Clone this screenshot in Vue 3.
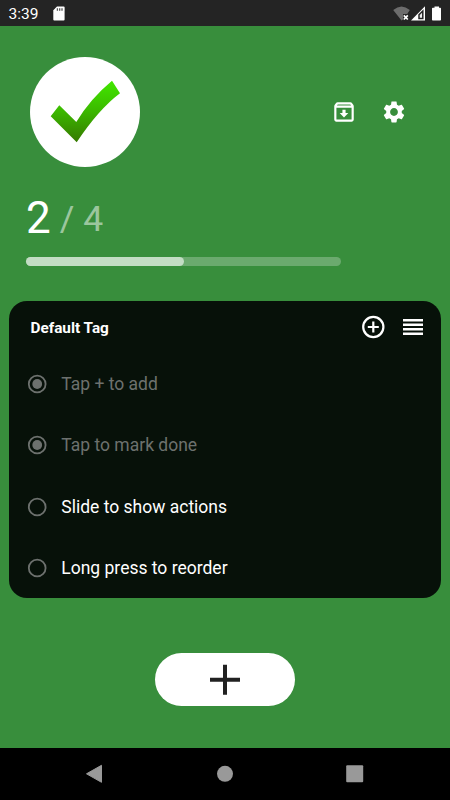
<script setup>
import { computed, ref } from 'vue'

const tasks = ref([
  { text: 'Tap + to add', done: true },
  { text: 'Tap to mark done', done: true },
  { text: 'Slide to show actions', done: false },
  { text: 'Long press to reorder', done: false },
])
const doneCount = computed(() => tasks.value.filter((t) => t.done).length)
const percent = computed(() => (doneCount.value / tasks.value.length) * 100)
</script>

<template>
  <div class="screen">
    <header class="status">
      <span class="time">3:39</span>
      <svg class="sd" width="12" height="15" viewBox="0 0 12 15">
        <path d="M4 0.5h6.6a1 1 0 0 1 1 1v12a1 1 0 0 1-1 1H1.300a1 1 0 0 1-1-1V4.200z" fill="#fff" />
        <path d="M4.400 2.300v2.500M6.700 2.300v2.500M9 2.300v2.500" stroke="#555" stroke-width="1.300" />
      </svg>
      <svg class="signals" width="50" height="16" viewBox="0 0 50 16">
        <path d="M0.200 4Q8.500-3.200 16.800 4L14.200 8H10V13.500L8.500 14.500Z" fill="#6c6c6c" />
        <path d="M10.800 9.300l4 4.200M14.800 9.300l-4 4.200" stroke="#fff" stroke-width="1.700" />
        <path d="M18 14.500L32 0.300V14.500Z" fill="#fff" />
        <path d="M26 12.500V8.800L29.800 5V12.500Z" fill="#eee" stroke="#242424" stroke-width="1.500" />
        <path d="M41.500 0.500h4.500v1.300h1.200q.8 0 .8.800v11.200q0 .8-.8.800h-7.400q-.8 0-.8-.8V2.600q0-.8.8-.8h1.700z" fill="#fff" />
      </svg>
    </header>

    <main class="content">
      <section class="top">
        <div class="logo">
          <svg width="110" height="110" viewBox="0 0 110 110">
            <defs>
              <linearGradient id="tick" x1="0" y1="0" x2="0" y2="1">
                <stop offset="0" stop-color="#42e800" />
                <stop offset="0.450" stop-color="#3cbd00" />
                <stop offset="1" stop-color="#367900" />
              </linearGradient>
            </defs>
            <path d="M20.700 59.300L29.300 48.300L46.300 65Q60 42 82 23.700L90 36.300Q68.500 52.500 46.700 85.300Z" fill="url(#tick)" />
          </svg>
        </div>
        <div class="tools">
          <svg width="26" height="26" viewBox="0 0 24 24" fill="#fff">
            <path d="M20.540 5.230l-1.390-1.680C18.880 3.210 18.470 3 18 3H6c-.470 0-.880.210-1.160.550L3.460 5.230C3.170 5.570 3 6.020 3 6.500V19c0 1.100.900 2 2 2h14c1.100 0 2-.900 2-2V6.500c0-.480-.170-.930-.460-1.270zM6.240 5h11.520l.830 1H5.420l.820-1zM5 19V8h14v11H5zm8.450-9h-2.900v3H8l4 4 4-4h-2.550z" />
          </svg>
          <svg width="26" height="26" viewBox="0 0 24 24" fill="#fff">
            <path d="M19.140 12.940c.040-.300.060-.610.060-.940 0-.320-.020-.640-.070-.940l2.030-1.580c.180-.140.230-.410.120-.610l-1.920-3.320c-.120-.220-.370-.290-.590-.220l-2.390.960c-.500-.380-1.030-.700-1.620-.940l-.360-2.540c-.040-.240-.240-.410-.480-.410h-3.840c-.240 0-.430.170-.470.410l-.360 2.540c-.590.240-1.130.570-1.620.940l-2.390-.960c-.220-.080-.470 0-.590.220L2.740 8.870c-.120.210-.080.470.120.610l2.030 1.580c-.050.300-.090.630-.090.940s.020.640.070.940l-2.030 1.580c-.180.140-.230.410-.120.610l1.920 3.320c.120.220.370.290.590.220l2.390-.960c.500.380 1.030.700 1.620.940l.360 2.540c.050.240.240.410.480.410h3.840c.240 0 .440-.170.470-.410l.360-2.540c.590-.240 1.130-.560 1.620-.940l2.390.960c.220.080.470 0 .590-.220l1.920-3.320c.120-.220.070-.470-.120-.610l-2.010-1.580zM12 15.600c-1.980 0-3.600-1.620-3.600-3.600s1.620-3.600 3.600-3.600 3.600 1.620 3.600 3.600-1.620 3.600-3.600 3.600z" />
          </svg>
        </div>
      </section>

      <section class="progress">
        <div class="count">
          <span class="done">{{ doneCount }}</span>
          <span class="total">/ {{ tasks.length }}</span>
        </div>
        <div class="track"><div class="fill" :style="{ width: percent + '%' }"></div></div>
      </section>

      <section class="card">
        <div class="card-head">
          <h2>Default Tag</h2>
          <div class="card-tools">
            <svg width="24" height="24" viewBox="0 0 24 24" fill="none" stroke="#fff" stroke-width="2.200">
              <circle cx="12.300" cy="12" r="10.100" />
              <path d="M12.300 6.500v11M6.800 12h11" />
            </svg>
            <svg width="20" height="16" viewBox="0 0 20 16">
              <path d="M0 1.300h20M0 5.800h20M0 10.300h20M0 14.800h20" stroke="#fff" stroke-width="2.400" />
            </svg>
          </div>
        </div>
        <ul>
          <li v-for="t in tasks" :key="t.text" :class="{ checked: t.done }">
            <svg width="20" height="20" viewBox="0 0 20 20">
              <circle cx="10.200" cy="10" r="8.400" fill="none" stroke="#6d716e" stroke-width="1.800" />
              <circle v-if="t.done" cx="10.200" cy="10" r="4.900" fill="#6d716e" />
            </svg>
            <span>{{ t.text }}</span>
          </li>
        </ul>
      </section>

      <button class="add" type="button" aria-label="Add">
        <svg width="32" height="32" viewBox="0 0 32 32">
          <path d="M16 0.700v30M1 15.700h30" stroke="#212121" stroke-width="4" />
        </svg>
      </button>
    </main>

    <nav class="navbar">
      <svg width="18" height="20" viewBox="0 0 18 20"><path d="M0.500 9.800L15.500 1.300V18.300Z" fill="#999" stroke="#999" stroke-linejoin="round" /></svg>
      <svg width="18" height="20" viewBox="0 0 18 20"><circle cx="9" cy="9.800" r="8" fill="#999" /></svg>
      <svg width="18" height="20" viewBox="0 0 18 20"><rect x="0.200" y="1.200" width="17" height="17" rx="1" fill="#999" /></svg>
    </nav>
  </div>
</template>

<style>
body {
  margin: 0;
}
</style>

<style scoped>
.screen {
  width: 450px;
  height: 800px;
  display: flex;
  flex-direction: column;
  overflow: hidden;
  background: #388e3c;
  color: #fff;
  font-family: Roboto, "Liberation Sans", sans-serif;
}
svg {
  display: block;
  flex: none;
}
.status {
  height: 26px;
  flex: none;
  box-sizing: border-box;
  display: flex;
  align-items: center;
  padding: 1px 7px 0 8.500px;
  background: #242424;
}
.time {
  width: 44.500px;
  font-size: 15.500px;
}
.signals {
  margin-left: auto;
}
.content {
  flex: 1;
  display: flex;
  flex-direction: column;
}
.top {
  display: flex;
  align-items: center;
  justify-content: space-between;
  padding: 30.500px 43px 0 30.400px;
}
.logo {
  width: 110px;
  height: 110px;
  border-radius: 50%;
  background: #fff;
}
.tools {
  display: flex;
  gap: 24px;
}
.progress {
  padding: 25.500px 0 0 26px;
}
.count {
  height: 65px;
  display: flex;
  align-items: flex-start;
}
.done {
  font-size: 44px;
  line-height: 52px;
}
.total {
  margin-left: 9px;
  font-size: 35.500px;
  line-height: 54px;
  font-weight: 400;
  color: rgba(255, 255, 255, 0.520);
}
.track {
  width: 315px;
  height: 9px;
  border-radius: 5px;
  background: #6baa6e;
}
.fill {
  height: 100%;
  border-radius: 5px;
  background: #c3ddc4;
}
.card {
  height: 297px;
  margin: 35px 9px 0;
  border-radius: 18px;
  background: #071109;
}
.card-head {
  height: 52px;
  display: flex;
  align-items: center;
  justify-content: space-between;
  padding: 0 18px 0 21.500px;
}
h2 {
  margin: 0;
  padding-top: 1px;
  font-size: 15.300px;
  font-weight: 700;
}
.card-tools {
  display: flex;
  align-items: center;
  gap: 18px;
}
ul {
  margin: 0;
  padding: 0.300px 18px 0;
  list-style: none;
}
li {
  height: 61.300px;
  display: flex;
  align-items: center;
  gap: 14.300px;
  font-size: 17.500px;
}
.checked {
  color: #6d716e;
}
.add {
  width: 140px;
  height: 53px;
  margin: 55px auto 0;
  padding: 0;
  border: 0;
  border-radius: 27px;
  background: #fff;
  display: flex;
  align-items: center;
  justify-content: center;
}
.navbar {
  height: 52px;
  flex: none;
  box-sizing: border-box;
  display: flex;
  align-items: center;
  justify-content: space-between;
  padding: 0 86px;
  background: #000;
}
</style>
